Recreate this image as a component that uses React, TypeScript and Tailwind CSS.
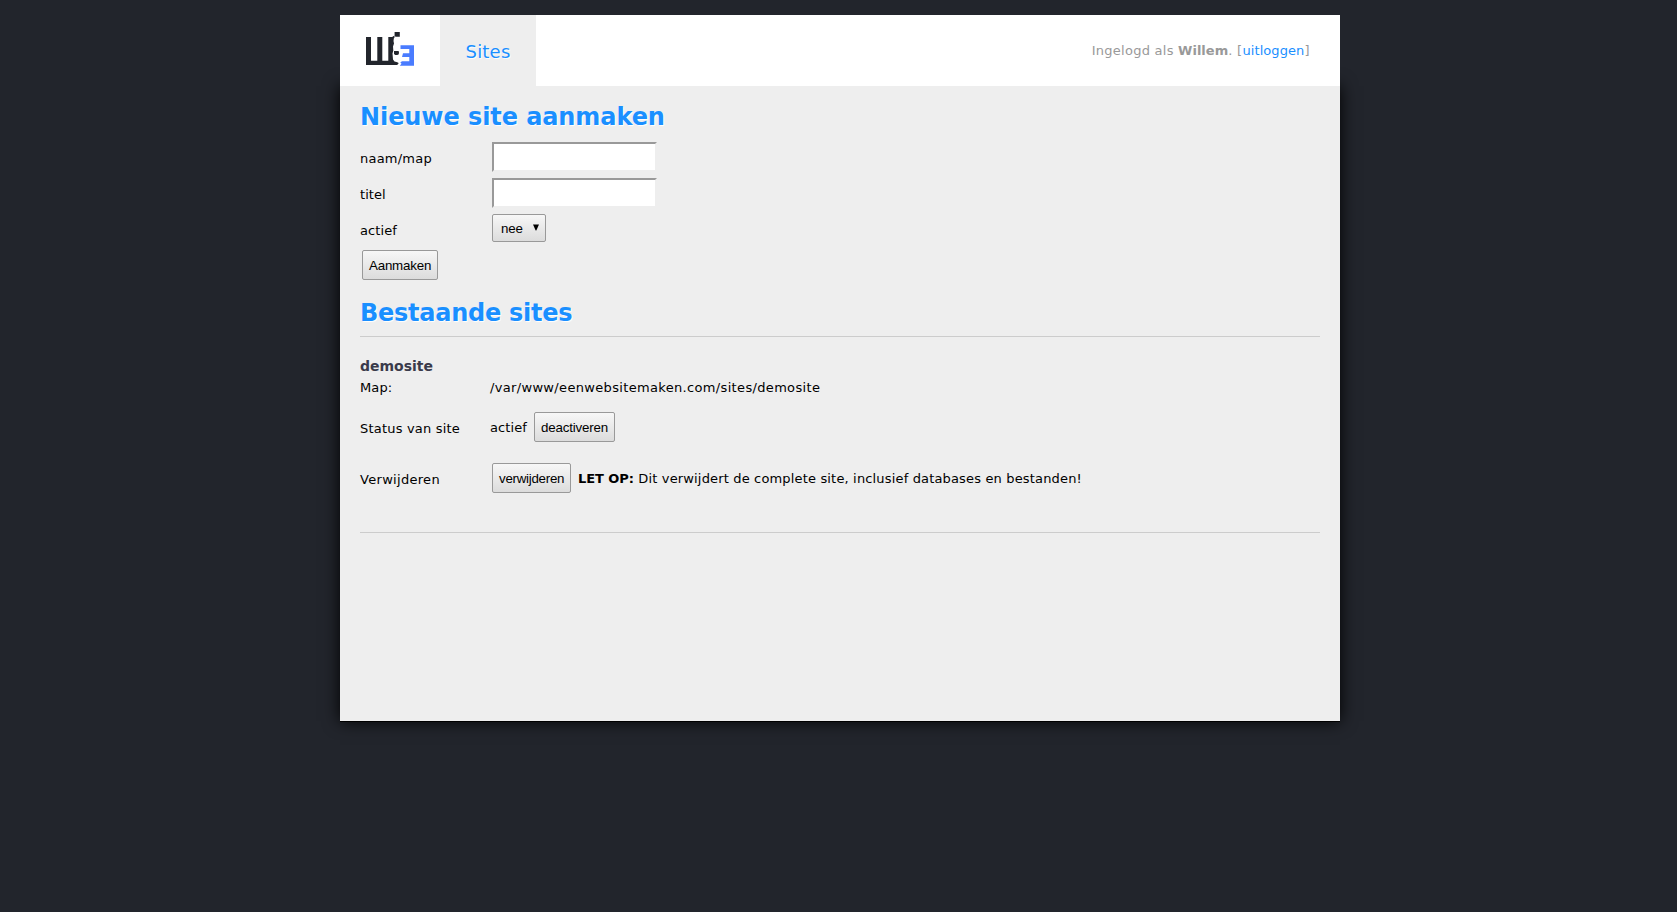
import type { ReactNode } from "react";

function Logo() {
  return (
    <svg width="50" height="38" viewBox="0 0 50 38" className="block">
      <g fill="#22252c">
        <path d="M1 6h5v23.700h6.300V6h5v23.700h6V6h5.700l-.5 4 .5 2.500-1 3 .3 4-.8 3 .3 3.500 .2 2.500 1.500 2 2 .5 1.800.8.2 1-1.500 1.200H1z" />
        <path d="M29.600 1h5.200v4.700h-4.200l-1-.7z" />
        <path d="M29 20h4.300l.7.800-.2 2.400-1.500.8h-2l-1.300-1z" />
        <path d="M27.500 5.500l2-.8v1.800l-1 1z" />
      </g>
      <path fill="#4a7cff" d="M35.500 14.200H49v20.500H34.800l1.700-2-1.200-1.200 1.700-1.300h7.300V26h-7.300l1-3.700h6.300V18h-8.800z" />
    </svg>
  );
}

function Button({ width, spacing, children }: { width: string; spacing: string; children: ReactNode }) {
  return (
    <button
      className={`h-[30px] shrink-0 rounded-[2px] border border-[#999] bg-linear-to-b from-[#f7f7f7] to-[#dcdcdc] pt-px pl-[6px] text-left font-['Liberation_Sans',Arial,sans-serif] text-[13.333px] leading-[27px] whitespace-nowrap text-black ${width} ${spacing}`}
    >
      {children}
    </button>
  );
}

function Heading({ spacing, children }: { spacing: string; children: ReactNode }) {
  return (
    <h1 className={`text-[24px] leading-[30px] font-bold text-[#1a8fff] [text-shadow:1px_1px_1px_#fff] ${spacing}`}>
      {children}
    </h1>
  );
}

function TextField({ id }: { id: string }) {
  return (
    <input
      id={id}
      className="h-[30px] w-[165px] border-2 border-t-[#999] border-r-[#eee] border-b-[#eee] border-l-[#999] bg-white px-1 outline-none"
    />
  );
}

export default function App() {
  return (
    <div className="min-h-[912px] bg-[#22252c] pt-[15px] pl-[340px] font-['DejaVu_Sans',Verdana,sans-serif] text-[13px] leading-[20px] text-black">
      <div className="w-[1000px]">
        <header className="relative flex h-[71px] items-center bg-white">
          <div className="w-[100px] self-start pt-4 pl-[25px]">
            <Logo />
          </div>
          <nav className="flex h-full w-[96px] items-center justify-center bg-[#eee] pt-[2px] text-[18px] tracking-[0.2px] text-[#1a8fff] [text-shadow:1px_1px_1px_#fff]">
            <a>Sites</a>
          </nav>
          <p className="ml-auto pr-[30.5px] text-[#999]">
            <span className="tracking-[0.26px]">Ingelogd als </span>
            <b>Willem</b>
            <span className="tracking-[0.3px]">. [</span>
            <a className="tracking-[0.08px] text-[#1a8fff]">uitloggen</a>]
          </p>
        </header>
        <main className="h-[635px] bg-[#eee] px-5 pt-4 shadow-[0_1px_0_#000,0_0_16px_#000]">
          <Heading spacing="tracking-[-0.08px]">Nieuwe site aanmaken</Heading>
          <form className="pt-[10px]">
            <div className="flex h-9">
              <label htmlFor="naam" className="w-[132px] pt-[7px] tracking-[0.23px]">naam/map</label>
              <TextField id="naam" />
            </div>
            <div className="flex h-9">
              <label htmlFor="titel" className="w-[132px] pt-[7px] tracking-[0.05px]">titel</label>
              <TextField id="titel" />
            </div>
            <div className="flex h-9">
              <span className="w-[132px] pt-[7px] tracking-[0.1px]">actief</span>
              <div className="flex h-7 w-[54px] items-center justify-between rounded-[2px] border border-[#999] bg-linear-to-b from-[#f7f7f7] to-[#dcdcdc] pr-[6px] pl-2 font-['Liberation_Sans',Arial,sans-serif] text-[13.333px]">
                <span className="pt-[2px] tracking-[-0.2px]">nee</span>
                <svg width="6" height="7" viewBox="0 0 6 7" className="mb-px"><path d="M0 .5h6L3.300 6.500h-.6z" /></svg>
              </div>
            </div>
            <div className="flex pl-[2px]">
              <Button width="w-[76px]" spacing="tracking-[-0.2px]">Aanmaken</Button>
            </div>
          </form>
          <div className="border-b border-[#ccc] pt-[18px] pb-[8px]">
            <Heading spacing="tracking-[-0.26px]">Bestaande sites</Heading>
          </div>
          <section className="h-[195px] pt-[19px]">
            <h2 className="text-[14px] leading-[20px] font-bold text-[#3a3a4a]">demosite</h2>
            <div className="flex pt-[2px]">
              <span className="w-[130px] tracking-[0.1px]">Map:</span>
              <span className="tracking-[0.335px]">/var/www/eenwebsitemaken.com/sites/demosite</span>
            </div>
            <div className="flex pt-[14px]">
              <span className="w-[130px] pt-[7px] tracking-[0.2px]">Status van site</span>
              <span className="w-[44px] pt-[6px] tracking-[0.1px]">actief</span>
              <Button width="w-[81px]" spacing="tracking-[-0.17px]">deactiveren</Button>
            </div>
            <div className="flex pt-[21px]">
              <span className="w-[132px] pt-[7px] tracking-[0.3px]">Verwijderen</span>
              <Button width="w-[79px]" spacing="tracking-[-0.27px]">verwijderen</Button>
              <span className="pt-[6px] pl-[7px] tracking-[0.16px]">
                <b className="tracking-[-0.05px]">LET OP:</b> Dit verwijdert de complete site, inclusief databases en bestanden!
              </span>
            </div>
          </section>
          <hr className="border-[#ccc]" />
        </main>
      </div>
    </div>
  );
}
